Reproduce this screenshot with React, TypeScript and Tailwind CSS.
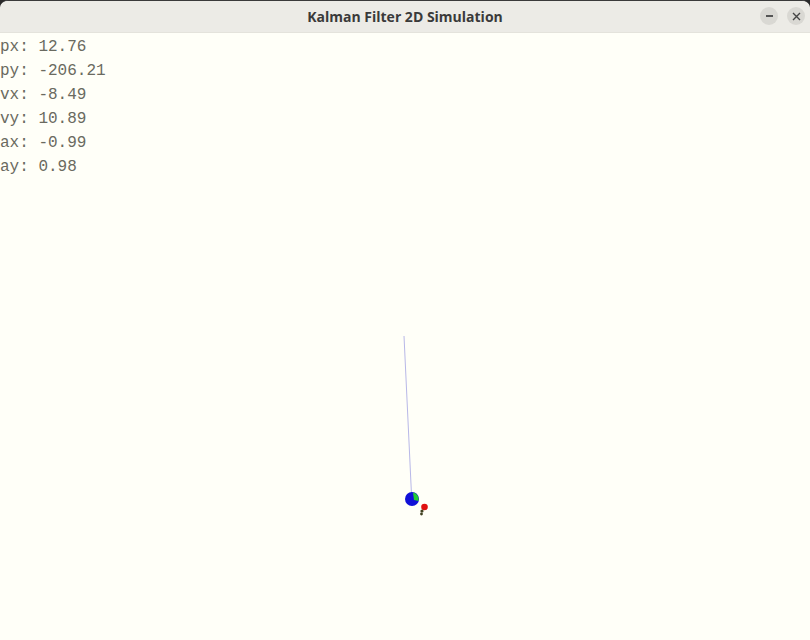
import React from "react";

const lines = [
  ["px", "12.76"],
  ["py", "-206.21"],
  ["vx", "-8.49"],
  ["vy", "10.89"],
  ["ax", "-0.99"],
  ["ay", "0.98"],
];

export default function App() {
  return (
    <div className="w-[810px] h-[640px] bg-[#2a2a2a] overflow-hidden">
      <div className="w-full h-full rounded-t-[8px] overflow-hidden flex flex-col bg-[#fffff8] border-t border-[#3a3a3a]">
        <div className="h-[32px] shrink-0 bg-[#ecebe6] relative flex items-center justify-center border-b border-[#e4e3dc]">
          <span
            className="text-[14px] font-bold text-[#3a3a3a]"
            style={{ fontFamily: "'Open Sans', 'Noto Sans', sans-serif" }}
          >
            Kalman Filter 2D Simulation
          </span>
          <div className="absolute right-[5px] top-[6px] flex gap-[9px]">
            <div className="w-[18px] h-[18px] rounded-full bg-[#d9d8d3] flex items-center justify-center">
              <div className="w-[7px] h-[1.5px] bg-[#555]" />
            </div>
            <div className="w-[18px] h-[18px] rounded-full bg-[#d9d8d3] flex items-center justify-center">
              <svg width="9" height="9" viewBox="0 0 9 9">
                <path d="M1 1 L8 8 M8 1 L1 8" stroke="#444" strokeWidth="1.4" />
              </svg>
            </div>
          </div>
        </div>
        <div className="relative flex-1">
          <div
            className="pt-[2px] text-[16px] leading-[24px] text-[#6a6a60]"
            style={{ fontFamily: "'Liberation Mono', monospace" }}
          >
            {lines.map(([k, v]) => (
              <div key={k} className="whitespace-pre">
                {k}: {v}
              </div>
            ))}
          </div>
          <svg className="absolute left-0 top-0" width="810" height="607">
            <line x1="404" y1="303" x2="411.5" y2="462" stroke="#b8b8e8" strokeWidth="1" />
            <circle cx="412" cy="466" r="7" fill="#1010d8" />
            <path d="M413 459.5 A7 7 0 0 1 418.5 468 L414 467 Z" fill="#22cc33" />
            <circle cx="424.5" cy="474" r="3.3" fill="#e01010" />
            <circle cx="422" cy="478" r="1.6" fill="#404020" />
            <circle cx="421.5" cy="481" r="1.4" fill="#404020" />
          </svg>
        </div>
      </div>
    </div>
  );
}
